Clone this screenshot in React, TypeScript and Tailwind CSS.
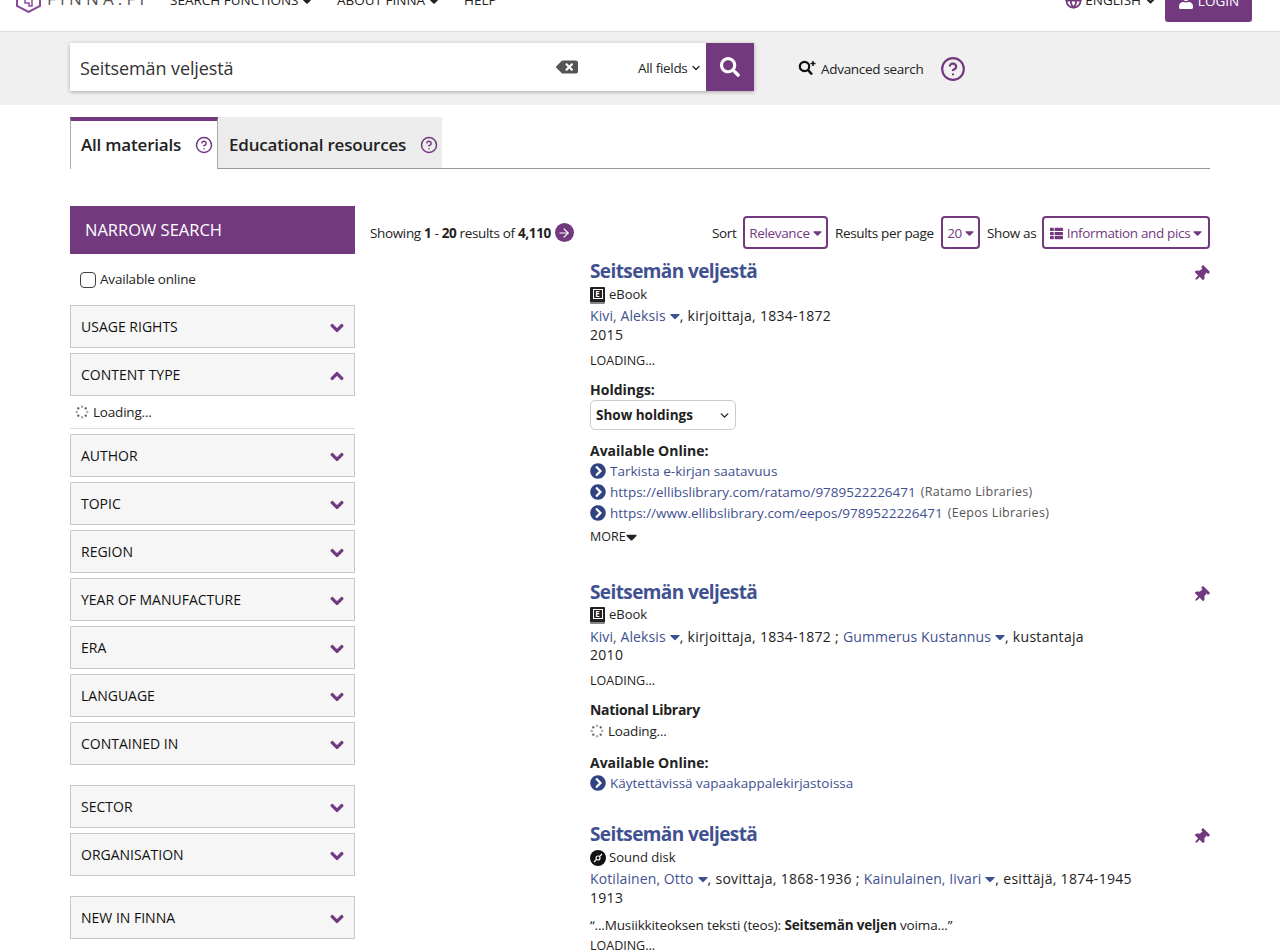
import { ChevronDown, Globe, HelpCircle, ArrowRight } from "lucide-react";
import { FaSearch, FaThumbtack, FaThList, FaCaretDown, FaBackspace, FaChevronCircleRight, FaChevronDown, FaChevronUp, FaUser } from "react-icons/fa";

const font = { fontFamily: '"Open Sans", sans-serif' };

function Spinner({ className }: { className?: string }) {
  const dots = [0, 45, 90, 135, 180, 225, 270, 315];
  return (
    <svg viewBox="0 0 16 16" className={className}>
      {dots.map((a, i) => (
        <circle key={a} cx="8" cy="2" r="1.4" fill={i % 2 ? "#666" : "#aaa"} transform={`rotate(${a} 8 8)`} />
      ))}
    </svg>
  );
}

function Caret() {
  return <FaCaretDown className="inline-block w-[10px] h-[16px] ml-1 text-[#3f5190] align-[-3px]" />;
}

function BoxCaret() {
  return <FaCaretDown className="w-[9px] h-[14px] ml-[3px]" />;
}

function Facet({ title, open }: { title: string; open?: boolean }) {
  return (
    <div className="h-[43px] border border-[#c8c8c8] bg-[#f6f6f6] flex items-center justify-between pl-[10px] pr-[10px] text-[14px] text-[#111]">
      <span>{title}</span>
      {open ? (
        <FaChevronUp className="w-[14px] h-[14px] mt-[2px] text-[#73397f]" stroke="currentColor" strokeWidth={40} />
      ) : (
        <FaChevronDown className="w-[14px] h-[14px] mt-[2px] text-[#73397f]" stroke="currentColor" strokeWidth={40} />
      )}
    </div>
  );
}

function Pin() {
  return <FaThumbtack className="absolute right-[1px] top-[8px] w-[16px] h-[16px] text-[#73397f] rotate-45" />;
}

function Link({ children }: { children: React.ReactNode }) {
  return <span className="text-[#3f5190] tracking-[0.1px]">{children}</span>;
}

function OnlineRow({ text, note }: { text: string; note?: string }) {
  return (
    <div className="h-[21px] flex items-center text-[13.5px] tracking-normal">
      <FaChevronCircleRight className="w-[16px] h-[16px] mr-[4px] text-[#2f4480] -mt-[2px]" />
      <span className="text-[#3f5190]">{text}</span>
      {note && <span className="ml-[5px] text-[12.5px] tracking-[0.3px] text-[#555]">{note}</span>}
    </div>
  );
}

function EbookIcon() {
  return (
    <span className="w-[15px] h-[17px] bg-[#222] border-b-2 border-[#888] rounded-[1px] mr-[4px] flex items-start justify-center pt-[2px]">
      <span className="w-[10px] h-[10px] border border-white text-white text-[8px] leading-[8px] font-bold text-center">E</span>
    </span>
  );
}

function DiscIcon() {
  return (
    <svg viewBox="0 0 16 16" className="w-[16px] h-[16px] mr-[3px]">
      <circle cx="8" cy="8" r="8" fill="#111" />
      <path d="M4 12 L6.5 9.5 M9.5 6.5 L12 4" stroke="#fff" strokeWidth="1.2" />
      <circle cx="8" cy="8" r="2" fill="none" stroke="#fff" strokeWidth="1.2" />
    </svg>
  );
}

function Title() {
  return <h2 className="text-[19px] leading-[26px] font-bold text-[#3f5190] tracking-[-0.6px]">Seitsemän veljestä</h2>;
}

export default function App() {
  return (
    <div className="h-[951px] overflow-hidden bg-white text-black" style={font}>
      {/* Header, scrolled partly out of view */}
      <header className="h-[32px] border-b border-[#dcdcdc] flex relative overflow-hidden text-[13.5px] text-[#222]">
        <div className="flex flex-1 items-start pl-[16px]">
          <svg viewBox="0 0 25 28" className="w-[25px] h-[28px] -mt-[15px] mr-[6px] shrink-0">
            <path d="M12.5 1 L24 7 V21 L12.5 27 L1 21 V7 Z" fill="none" stroke="#8a4a9c" strokeWidth="2" />
            <path d="M9 14 h7 v7 h-3 v-3 h-4 z" fill="none" stroke="#8a4a9c" strokeWidth="1.5" />
          </svg>
          <span className="text-[17px] tracking-[4.2px] font-medium text-[#555] leading-[17px] w-[123px] -mt-[10px]">FINNA.FI</span>
          <span className="leading-[16px] w-[167px] -mt-[8px]">SEARCH FUNCTIONS <FaCaretDown className="inline w-[10px] h-[14px]" /></span>
          <span className="leading-[16px] w-[127px] -mt-[8px]">ABOUT FINNA <FaCaretDown className="inline w-[10px] h-[14px]" /></span>
          <span className="leading-[16px] -mt-[8px]">HELP</span>
        </div>
        <div className="flex items-start pr-[28px]">
          <div className="flex items-center h-[16px] mt-[-8px] mr-[9px]">
            <Globe className="w-[17px] h-[17px] text-[#73397f] mr-[3px]" strokeWidth={2.5} />
            ENGLISH
            <FaChevronDown className="w-[11px] h-[11px] ml-[4px]" stroke="currentColor" strokeWidth={30} />
          </div>
          <div className="w-[87px] h-[22px] bg-[#73397f] rounded-b-[3px] text-white flex items-end justify-center pb-[13px] leading-[16px]">
            <FaUser className="w-[16px] h-[16px] mr-[4px]" />
            LOGIN
          </div>
        </div>
      </header>

      {/* Search band */}
      <div className="h-[73px] bg-[#f0f0f0] pt-[11px] pl-[70px] flex items-start">
        <div className="w-[684px] h-[48px] bg-white shadow-[0_1px_4px_rgba(0,0,0,0.3)] flex items-center">
          <span className="pl-[10px] text-[18px] tracking-[-0.1px] text-[#333] w-[486px] whitespace-nowrap mt-[3px]">Seitsemän veljestä</span>
          <FaBackspace className="w-[22px] h-[18px] text-[#555]" />
          <span className="ml-[60px] text-[13.5px] tracking-[-0.3px] text-[#222] w-[51px] whitespace-nowrap mt-[3px]">All fields</span>
          <ChevronDown className="w-[12px] h-[12px] ml-[1px] mt-[2px] text-[#222]" strokeWidth={2.5} />
          <div className="w-[48px] h-[48px] ml-auto bg-[#73397f] flex items-center justify-center">
            <FaSearch className="w-[20px] h-[20px] text-white" />
          </div>
        </div>
        <div className="ml-[44px] h-[52px] flex items-center text-[13.5px] tracking-[-0.3px] text-[#222]">
          <svg viewBox="0 0 18 16" className="w-[18px] h-[16px] mr-[5px] -mt-[2px]">
            <circle cx="6.5" cy="6.5" r="4.7" fill="none" stroke="#111" strokeWidth="2.2" />
            <path d="M10 10 L14 14.5" stroke="#111" strokeWidth="2.6" />
            <path d="M15 1 V6 M12.5 3.5 H17.5" stroke="#111" strokeWidth="1.5" />
          </svg>
          Advanced search
          <HelpCircle className="w-[26px] h-[26px] ml-[17px] text-[#73397f]" strokeWidth={2} />
        </div>
      </div>

      {/* Tabs */}
      <div className="mx-[70px] mt-[12px] h-[52px] border-b border-[#999] flex">
        <div className="w-[148px] h-[52px] border-t-4 border-t-[#73397f] border-x border-x-[#aaa] bg-white flex items-center justify-between pl-[10px] pr-[4px] text-[17px] tracking-[-0.2px] font-semibold text-[#222] whitespace-nowrap">
          All materials
          <HelpCircle className="w-[18px] h-[18px] text-[#73397f]" />
        </div>
        <div className="w-[224px] h-[51px] bg-[#ececec] pt-[4px] flex items-center justify-between pl-[11px] pr-[4px] text-[17px] tracking-[-0.2px] font-semibold text-[#222] whitespace-nowrap">
          Educational resources
          <HelpCircle className="w-[18px] h-[18px] text-[#73397f]" />
        </div>
      </div>

      <div className="mx-[70px] mt-[37px] flex">
        {/* Sidebar */}
        <aside className="w-[285px] shrink-0">
          <div className="h-[48px] bg-[#73397f] text-white text-[16.5px] flex items-center pl-[15px]">NARROW SEARCH</div>
          <label className="h-[51px] flex items-center pl-[10px] text-[13.5px] tracking-[-0.2px] text-[#222]">
            <span className="w-[16px] h-[16px] border border-[#444] rounded-[4px] mr-[4px]" />
            Available online
          </label>
          <div className="flex flex-col gap-[5px]">
            <Facet title="USAGE RIGHTS" />
            <Facet title="CONTENT TYPE" open />
          </div>
          <div className="h-[33px] border-b border-[#ddd] flex items-center pl-[5px] text-[13.5px] tracking-[-0.2px] text-[#222] mb-[5px]">
            <Spinner className="w-[14px] h-[14px] mr-[4px]" />
            Loading...
          </div>
          <div className="flex flex-col gap-[5px]">
            <Facet title="AUTHOR" />
            <Facet title="TOPIC" />
            <Facet title="REGION" />
            <Facet title="YEAR OF MANUFACTURE" />
            <Facet title="ERA" />
            <Facet title="LANGUAGE" />
            <Facet title="CONTAINED IN" />
          </div>
          <div className="flex flex-col gap-[5px] mt-[20px]">
            <Facet title="SECTOR" />
            <Facet title="ORGANISATION" />
          </div>
          <div className="mt-[20px]">
            <Facet title="NEW IN FINNA" />
          </div>
        </aside>

        {/* Results */}
        <main className="flex-1 pl-[15px] text-[14px]">
          <div className="h-[44px] flex items-start pt-[10px] text-[13.5px] tracking-[-0.35px] text-[#222]">
            <div className="flex items-center h-[33px]">
              <span className="pt-[1px]">Showing <b>1</b> - <b>20</b> results of <b>4,110</b></span>
              <span className="w-[19px] h-[19px] ml-[4px] rounded-full bg-[#73397f] flex items-center justify-center">
                <ArrowRight className="w-[14px] h-[14px] text-white" />
              </span>
            </div>
            <div className="ml-auto flex items-center gap-[7px]">
              <span className="w-[24px] pt-[1px] whitespace-nowrap">Sort</span>
              <span className="w-[85px] h-[33px] pt-[1px] border-2 border-[#73397f] rounded-[4px] flex items-center justify-center text-[#73397f]">Relevance <BoxCaret /></span>
              <span className="w-[99px] pt-[1px] whitespace-nowrap">Results per page</span>
              <span className="w-[39px] h-[33px] pt-[1px] border-2 border-[#73397f] rounded-[4px] flex items-center justify-center text-[#73397f]">20 <BoxCaret /></span>
              <span className="w-[48px] pt-[1px] whitespace-nowrap">Show as</span>
              <span className="w-[168px] h-[33px] pt-[1px] border-2 border-[#73397f] rounded-[4px] flex items-center justify-center text-[#73397f]"><FaThList className="w-[13px] h-[13px] mr-[4px]" />Information and pics <BoxCaret /></span>
            </div>
          </div>

          <div className="pl-[220px] pt-[8px] tracking-[0.3px] text-[#222]">
            {/* Record 1 */}
            <article className="relative h-[321px]">
              <Title />
              <div className="h-[20px] mt-[1px] flex items-center text-[13px] tracking-normal"><EbookIcon />eBook</div>
              <div className="leading-[19px] mt-[1px]"><Link>Kivi, Aleksis<Caret /></Link>, kirjoittaja, 1834-1872</div>
              <div className="leading-[19px]">2015</div>
              <div className="leading-[19px] mt-[7px] text-[12.5px] tracking-normal">LOADING...</div>
              <div className="leading-[20px] mt-[10px] font-bold tracking-normal">Holdings:</div>
              <div className="w-[146px] h-[30px] border border-[#ccc] rounded-[5px] flex items-center justify-between pl-[5px] pr-[4px] font-bold text-[13.5px] tracking-normal">
                Show holdings
                <ChevronDown className="w-[13px] h-[13px]" strokeWidth={2.5} />
              </div>
              <div className="leading-[21px] mt-[10px] font-bold tracking-normal">Available Online:</div>
              <OnlineRow text="Tarkista e-kirjan saatavuus" />
              <OnlineRow text="https://ellibslibrary.com/ratamo/9789522226471" note="(Ratamo Libraries)" />
              <OnlineRow text="https://www.ellibslibrary.com/eepos/9789522226471" note="(Eepos Libraries)" />
              <div className="leading-[20px] mt-[3px] text-[12.5px] tracking-normal flex items-center">MORE<FaCaretDown className="w-[11px] h-[18px]" /></div>
              <Pin />
            </article>

            {/* Record 2 */}
            <article className="relative h-[242px]">
              <Title />
              <div className="h-[20px] flex items-center text-[13px] tracking-normal"><EbookIcon />eBook</div>
              <div className="leading-[19px] mt-[2px]"><Link>Kivi, Aleksis<Caret /></Link>, kirjoittaja, 1834-1872 ; <Link>Gummerus Kustannus<Caret /></Link>, kustantaja</div>
              <div className="leading-[18px]">2010</div>
              <div className="leading-[19px] mt-[7px] text-[12.5px] tracking-normal">LOADING...</div>
              <div className="leading-[20px] mt-[10px] font-bold tracking-[-0.3px]">National Library</div>
              <div className="h-[22px] flex items-center text-[13.5px] tracking-[-0.2px]"><Spinner className="w-[14px] h-[14px] mr-[4px]" />Loading...</div>
              <div className="leading-[21px] mt-[10px] font-bold tracking-normal">Available Online:</div>
              <OnlineRow text="Käytettävissä vapaakappalekirjastoissa" />
              <Pin />
            </article>

            {/* Record 3 */}
            <article className="relative">
              <Title />
              <div className="h-[20px] mt-[1px] flex items-center text-[13px] tracking-normal"><DiscIcon />Sound disk</div>
              <div className="leading-[19px] mt-[1px]"><Link>Kotilainen, Otto<Caret /></Link>, sovittaja, 1868-1936 ; <Link>Kainulainen, Iivari<Caret /></Link>, esittäjä, 1874-1945</div>
              <div className="leading-[19px]">1913</div>
              <div className="leading-[20px] mt-[8px] text-[13.5px] tracking-[-0.15px]">“...Musiikkiteoksen teksti (teos): <b>Seitsemän veljen</b> voima...”</div>
              <div className="leading-[19px] mt-[1px] text-[12.5px] tracking-normal">LOADING...</div>
              <Pin />
            </article>
          </div>
        </main>
      </div>
    </div>
  );
}
